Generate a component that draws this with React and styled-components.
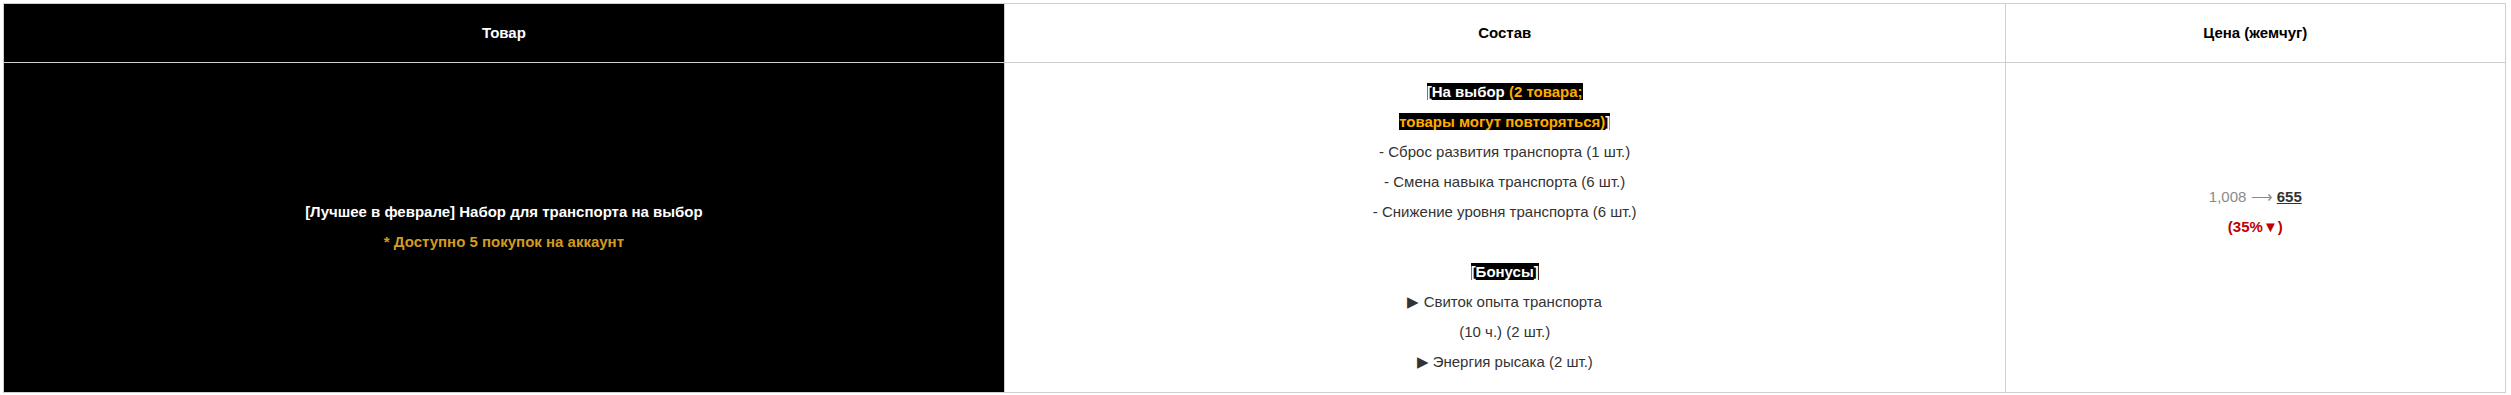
import React from "react";
import styled, { createGlobalStyle } from "styled-components";

const Global = createGlobalStyle`
  html, body { margin: 0; padding: 0; background: #fff; }
  body { font-family: "Liberation Sans", Arial, sans-serif; }
`;

const Page = styled.div`
  padding: 3px 5px 3px 3px;
`;

const Table = styled.table`
  width: 100%;
  border-collapse: collapse;
  table-layout: fixed;
  font-family: "Liberation Sans", Arial, sans-serif;
  font-size: 15px;
  line-height: 30px;
  color: #333;
  text-align: center;
`;

const Col = styled.col`
  width: ${(p) => p.$w};
`;

const HeadCell = styled.th`
  border: 1px solid #cfcfcf;
  padding: 14px 10px;
  font-size: 15px;
  font-weight: bold;
  background: ${(p) => (p.$dark ? "#000" : "#fff")};
  color: ${(p) => (p.$dark ? "#fff" : "#000")};
`;

const Cell = styled.td`
  border: 1px solid #cfcfcf;
  padding: 14px 10px 15px;
  vertical-align: middle;
  background: ${(p) => (p.$dark ? "#000" : "#fff")};
`;

const Line = styled.div`
  min-height: 30px;
`;

const Title = styled.div`
  color: #fff;
  font-weight: bold;
`;

const Note = styled.div`
  color: #d39b22;
  font-weight: bold;
`;

const Tag = styled.span`
  background: #000;
  color: #fff;
  font-weight: bold;
`;

const Accent = styled.span`
  color: #ffab00;
`;

const OldPrice = styled.span`
  color: #8a8a8a;
`;

const NewPrice = styled.span`
  color: #333;
  font-weight: bold;
  text-decoration: underline;
`;

const Discount = styled.div`
  color: #c00000;
  font-weight: bold;
`;

export default function App() {
  return (
    <>
      <Global />
      <Page>
        <Table>
          <colgroup>
            <Col $w="40%" />
            <Col $w="40%" />
            <Col $w="20%" />
          </colgroup>
          <thead>
            <tr>
              <HeadCell $dark>Товар</HeadCell>
              <HeadCell>Состав</HeadCell>
              <HeadCell>Цена (жемчуг)</HeadCell>
            </tr>
          </thead>
          <tbody>
            <tr>
              <Cell $dark>
                <Title>[Лучшее в феврале] Набор для транспорта на выбор</Title>
                <Note>* Доступно 5 покупок на аккаунт</Note>
              </Cell>
              <Cell>
                <Line>
                  <Tag>
                    [На выбор <Accent>(2 товара;</Accent>
                  </Tag>
                </Line>
                <Line>
                  <Tag>
                    <Accent>товары могут повторяться)</Accent>]
                  </Tag>
                </Line>
                <Line>- Сброс развития транспорта (1 шт.)</Line>
                <Line>- Смена навыка транспорта (6 шт.)</Line>
                <Line>- Снижение уровня транспорта (6 шт.)</Line>
                <Line />
                <Line>
                  <Tag>[Бонусы]</Tag>
                </Line>
                <Line>▶ Свиток опыта транспорта</Line>
                <Line>(10 ч.) (2 шт.)</Line>
                <Line>▶ Энергия рысака (2 шт.)</Line>
              </Cell>
              <Cell>
                <Line>
                  <OldPrice>1,008 ⟶</OldPrice> <NewPrice>655</NewPrice>
                </Line>
                <Discount>(35%▼)</Discount>
                <Line />
              </Cell>
            </tr>
          </tbody>
        </Table>
      </Page>
    </>
  );
}
